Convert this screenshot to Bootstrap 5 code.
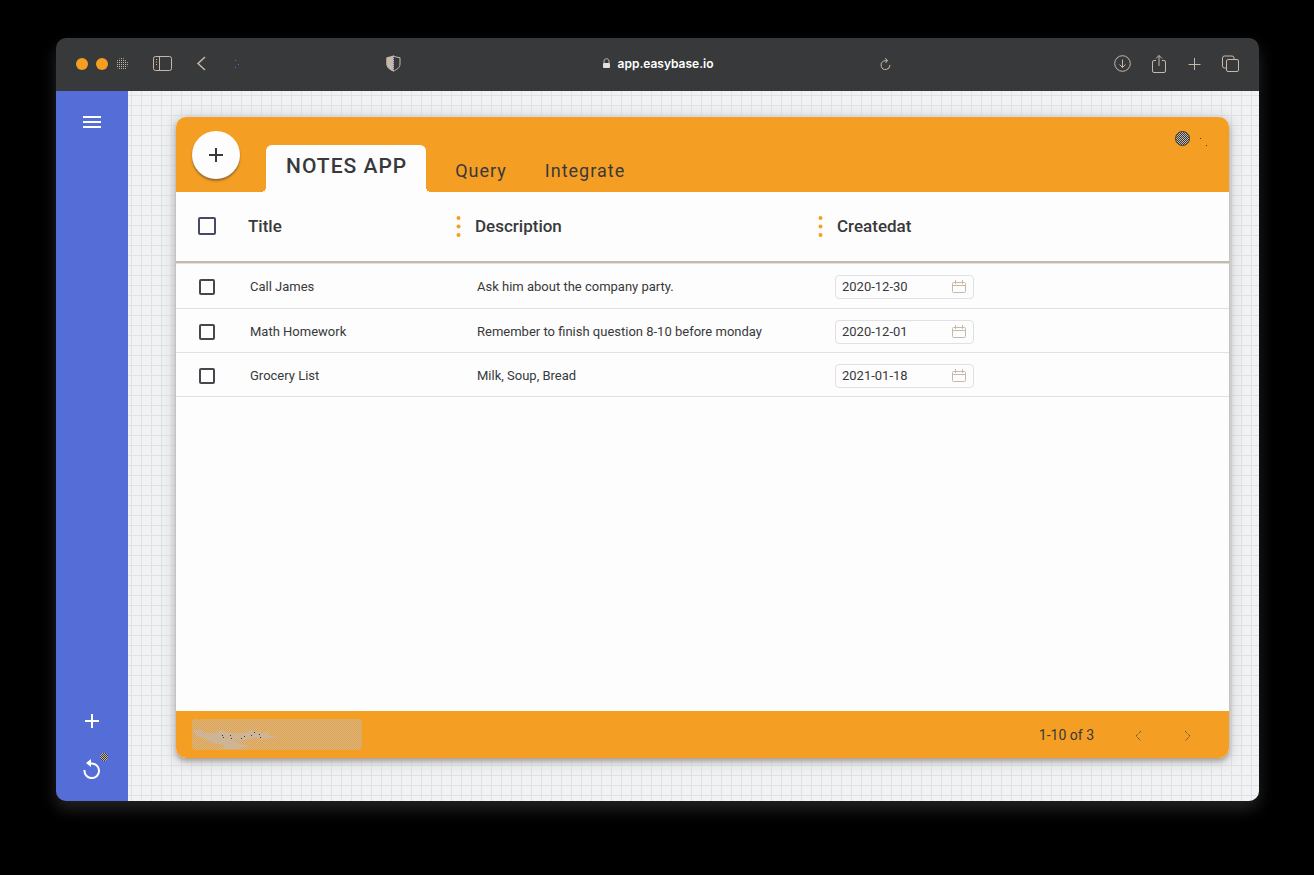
<!DOCTYPE html>
<html lang="en">
<head>
<meta charset="utf-8">
<meta name="viewport" content="width=device-width, initial-scale=1">
<title>Notes App</title>
<link href="https://cdn.jsdelivr.net/npm/bootstrap@5.3.0/dist/css/bootstrap.min.css" rel="stylesheet">
<style>
:root { --ink: #38393b; --amber: #f49e23; --indigo: #556dd6; --sand: #c7b9a9; --mist: #dfe1e5; --paper: #fdfdfd; }
body { background: #000; color: var(--ink); font-family: Roboto, "Liberation Sans", sans-serif; }
.desktop { padding: 38px 55px 74px 56px; }
.browser { border-radius: 10px; overflow: hidden; background: var(--ink); box-shadow: 0 8px 16px rgba(90, 90, 90, .4); }
.titlebar { display: grid; grid-template-columns: 1fr auto 1fr; height: 53px; padding-bottom: 2px; color: var(--sand); }
.plain { border: 0; padding: 0; background: none; color: inherit; display: flex; }
.light { width: 12px; height: 12px; border-radius: 50%; background: var(--amber); }
.light-off { background: repeating-conic-gradient(var(--sand) 0 25%, var(--ink) 0 100%) 0 0 / 2px 2px; }
.lights { gap: 8px; padding-left: 20px; }
.gap-side { margin-left: 25px; }
.gap-back { margin-left: 24px; }
.gap-forward { margin-left: 28px; }
.gap-shield { margin-right: 201px; }
.gap-reload { margin-left: 167px; }
.tools { gap: 20px; padding-right: 20px; }
.url { font: 600 12px/20px Inter, sans-serif; color: #fff; gap: 7px; }
.rail { width: 72px; flex: 0 0 auto; background: var(--indigo); color: #fff; padding: 24px 0 22px; }
.rail-bottom { gap: 30px; }
.dotted-badge { position: absolute; top: -5px; right: -7px; width: 8px; height: 8px; border-radius: 50%; background: repeating-conic-gradient(var(--ink) 0 25%, var(--sand) 0 50%) 0 0 / 2px 2px; }
.canvas { min-width: 0; padding: 26px 30px 43px 48px; background-color: #f1f2f3; background-image: linear-gradient(90deg, var(--mist) 1px, transparent 1px), linear-gradient(var(--mist) 1px, transparent 1px); background-size: 10px 10px; background-position: 3px 4px; }
.sheet { border-radius: 10px; background: var(--paper); box-shadow: 0 3px 5px rgba(150, 135, 115, .7), 0 2px 12px 4px rgba(205, 207, 213, .8); }
.sheet-top { height: 75px; background: var(--amber); border-radius: 10px 10px 0 0; padding: 0 20px 0 16px; }
.add { width: 48px; height: 48px; margin: 14px 26px 0 0; border-radius: 50%; background: var(--paper); color: var(--ink); border: 0; box-shadow: 0 2px 2px rgba(56, 57, 59, .5); }
.tab-on { height: 47px; padding: 0 19px 3px 20px; border-radius: 6px 6px 0 0; background: var(--paper); color: var(--ink); font-size: 21px; font-weight: 500; letter-spacing: 1px; text-decoration: none; }
.tab-on::before, .tab-on::after { content: ""; position: absolute; bottom: 0; width: 5px; height: 5px; }
.tab-on::before { right: 100%; background: radial-gradient(circle at 0 0, var(--amber) 5px, var(--paper) 5px); }
.tab-on::after { left: 100%; background: radial-gradient(circle at 100% 0, var(--amber) 5px, var(--paper) 5px); }
.tab-off { color: var(--ink); font-size: 18px; line-height: 24px; letter-spacing: 1px; text-decoration: none; margin: 0 9px 9px 29px; }
.knob { width: 15px; height: 15px; margin-top: 14px; border: 1px solid var(--ink); border-radius: 50%; background: repeating-conic-gradient(var(--ink) 0 25%, var(--sand) 0 50%) 0 0 / 2px 2px; }
.sheet-body { height: 519px; overflow: auto; }
.notes { table-layout: fixed; width: 100%; border-collapse: separate; border-spacing: 0; font-size: 13px; line-height: 20px; }
.notes th { height: 71px; padding: 0 0 1px; font-size: 17px; font-weight: 500; border-bottom: 2px solid var(--sand); box-shadow: 0 1px 0 var(--mist); }
.notes td { height: 44px; padding: 2px 0 0; border-bottom: 1px solid var(--mist); }
.notes tbody tr:first-child td { height: 46px; }
.notes .c-pick { width: 72px; padding-left: 22px; }
.c-title { width: 208px; }
.c-desc { width: 362px; }
.col-menu { margin-right: 14px; }
.notes td.c-title { padding-left: 2px; }
.notes td.c-desc { padding-left: 21px; }
.notes td.c-date { padding-left: 17px; }
.tick { appearance: none; display: block; width: 16px; height: 16px; margin: 0 0 0 1px; border: 2px solid #46464c; border-radius: 2px; background: var(--paper); }
.tick-all { width: 18px; height: 18px; margin: 0; border-color: #46496a; }
.tick:checked { background: var(--indigo); }
.date-box { width: 139px; height: 24px; border: 1px solid var(--mist); border-radius: 4px; padding: 0 7px 0 6px; color: var(--sand); }
.date-box input { width: 90px; border: 0; padding: 0; background: none; color: var(--ink); font-size: 13px; line-height: 20px; outline: 0; }
.sheet-foot { height: 47px; background: var(--amber); border-radius: 0 0 10px 10px; padding: 0 37px 0 16px; font-size: 14px; }
.search { position: relative; width: 170px; height: 31px; }
.search input { width: 100%; height: 100%; border: 0; border-radius: 4px; padding: 0 8px; background: repeating-conic-gradient(var(--amber) 0 25%, var(--sand) 0 50%) 0 0 / 2px 2px; }
.search svg { position: absolute; left: 0; top: 8px; pointer-events: none; }
.pager { gap: 40px; padding-top: 2px; }
</style>
</head>
<body>
<div class="desktop min-vh-100 d-flex flex-column">
<div class="browser flex-grow-1 d-flex flex-column">
  <header class="titlebar align-items-center">
    <div class="d-flex align-items-center">
      <div class="lights d-flex">
        <button class="plain light" aria-label="Close"></button>
        <button class="plain light" aria-label="Minimize"></button>
        <button class="plain light light-off" aria-label="Zoom"></button>
      </div>
      <button class="plain gap-side" aria-label="Sidebar"><svg width="19" height="16" fill="none" stroke="currentColor"><rect x=".5" y=".5" width="18" height="14" rx="2"/><path d="M6.500 1v14M3.500 3v1M3.500 5.500v1M3.500 8v1"/></svg></button>
      <button class="plain gap-back" aria-label="Back"><svg width="11" height="15" fill="none" stroke="currentColor" stroke-width="1.500"><path d="M9 1 2 7.500 9 14"/></svg></button>
      <svg class="gap-forward" width="10" height="10" fill="#556dd6" aria-hidden="true"><path d="M0 1h1v1H0zM3 5h1v1H3zM0 8h1v1H0z"/></svg>
      <button class="plain ms-auto gap-shield" aria-label="Privacy report"><svg width="15" height="17" fill="none" stroke="currentColor"><path d="M7.500 1 10 2l4 .7V9c0 4-4 6-6.500 7C5 15 1 13 1 9V2.700L5 2z"/><path d="M7.500 1 5 2 1 2.700V9c0 4 4 6 6.500 7z" fill="currentColor"/><path d="M7.500 2v14" stroke="#556dd6" stroke-dasharray="1 1"/></svg></button>
    </div>
    <div class="url d-flex align-items-center">
      <svg width="9" height="11" aria-hidden="true"><path d="M2 5V3c0-3 5-3 5 0v2" fill="none" stroke="#c7b9a9"/><rect x="1" y="5" width="7" height="5" rx="1" fill="#dfe1e5"/></svg>
      <span>app.easybase.io</span>
    </div>
    <div class="d-flex align-items-center">
      <button class="plain gap-reload" aria-label="Reload"><svg width="12" height="13" fill="none" stroke="currentColor"><path d="M3.500 4A4.500 4.500 0 1 0 10 8M3.500 4l4-.5M5 1l2.500 2.500L5.500 6"/></svg></button>
      <div class="tools d-flex align-items-center ms-auto">
        <button class="plain" aria-label="Downloads"><svg width="17" height="17" fill="none" stroke="currentColor"><circle cx="8.500" cy="8.500" r="7.800"/><path d="M8.500 4.500v8M5.500 9.500l3 3 3-3"/></svg></button>
        <button class="plain" aria-label="Share"><svg width="16" height="20" fill="none" stroke="currentColor"><path d="M5 6.500H3Q1.500 6.500 1.500 8v9q0 1.500 1.500 1.500h10q1.500 0 1.500-1.500V8q0-1.500-1.500-1.500h-2M8 12V1.500M5 4.500l3-3 3 3"/></svg></button>
        <button class="plain" aria-label="New tab"><svg width="15" height="14" fill="none" stroke="currentColor"><path d="M7.500 1v12M1.500 7.500h12"/></svg></button>
        <button class="plain" aria-label="Tab overview"><svg width="17" height="18" fill="none" stroke="currentColor"><path d="M5 13H2.500Q.5 13 .5 11V3Q.5 1 2.500 1H10q2 0 2 2v1"/><rect x="4.500" y="4.500" width="12" height="12" rx="1.500"/></svg></button>
      </div>
    </div>
  </header>

  <div class="d-flex flex-grow-1">
    <nav class="rail d-flex flex-column align-items-center justify-content-between" aria-label="Main">
      <button class="plain" aria-label="Menu"><svg width="18" height="14" fill="#fff"><path d="M0 1h18v2H0zM0 6h18v2H0zM0 11h18v2H0z"/></svg></button>
      <div class="rail-bottom d-flex flex-column align-items-center">
        <button class="plain" aria-label="New"><svg width="14" height="14" fill="none" stroke="#fff" stroke-width="2"><path d="M7 0v14M0 7h14"/></svg></button>
        <button class="plain position-relative" aria-label="Refresh"><svg width="18" height="21" fill="none" stroke="#fff" stroke-width="2"><path d="M1.500 12A7.300 7.300 0 1 0 8 5.500H6"/><path d="M8 1v8L3 5z" fill="#fff" stroke="none"/></svg><span class="dotted-badge"></span></button>
      </div>
    </nav>

    <main class="canvas flex-grow-1">
      <section class="sheet">
        <div class="sheet-top d-flex">
          <button class="add d-flex align-items-center justify-content-center flex-shrink-0" aria-label="Add record"><svg width="14" height="14" fill="none" stroke="currentColor" stroke-width="2"><path d="M7 0v14M0 7h14"/></svg></button>
          <nav class="d-flex align-items-end" aria-label="Views">
            <a href="#" class="tab-on position-relative d-flex align-items-center text-nowrap">NOTES APP</a>
            <a href="#" class="tab-off">Query</a>
            <a href="#" class="tab-off">Integrate</a>
          </nav>
          <button class="plain ms-auto knob" aria-label="Theme"></button>
          <svg class="ms-2 mt-3" width="11" height="14" fill="#38393b" aria-hidden="true"><path d="M6 -1h1v1H6zM2 5h1v1H2zM8 12h1v1H8z"/></svg>
        </div>

        <div class="sheet-body">
          <table class="notes">
            <thead>
              <tr>
                <th class="c-pick"><input type="checkbox" class="tick tick-all" aria-label="Select all"></th>
                <th class="c-title">Title</th>
                <th class="c-desc"><div class="d-flex align-items-center"><button class="plain col-menu" aria-label="Title column menu"><svg width="5" height="22" fill="#f49e23"><circle cx="2.500" cy="3" r="2"/><circle cx="2.500" cy="11.500" r="2"/><circle cx="2.500" cy="20" r="2"/></svg></button>Description</div></th>
                <th class="c-date"><div class="d-flex align-items-center"><button class="plain col-menu" aria-label="Description column menu"><svg width="5" height="22" fill="#f49e23"><circle cx="2.500" cy="3" r="2"/><circle cx="2.500" cy="11.500" r="2"/><circle cx="2.500" cy="20" r="2"/></svg></button>Createdat</div></th>
              </tr>
            </thead>
            <tbody>
              <tr>
                <td class="c-pick"><input type="checkbox" class="tick" aria-label="Select Call James"></td>
                <td class="c-title">Call James</td>
                <td class="c-desc">Ask him about the company party.</td>
                <td class="c-date"><div class="date-box d-flex align-items-center justify-content-between"><input type="text" value="2020-12-30" aria-label="Created at"><svg width="14" height="14" fill="none" stroke="currentColor"><rect x=".5" y="2.500" width="13" height="10" rx="1"/><path d="M1 5.500h12M3.500 0v4M10.500 0v4"/></svg></div></td>
              </tr>
              <tr>
                <td class="c-pick"><input type="checkbox" class="tick" aria-label="Select Math Homework"></td>
                <td class="c-title">Math Homework</td>
                <td class="c-desc">Remember to finish question 8-10 before monday</td>
                <td class="c-date"><div class="date-box d-flex align-items-center justify-content-between"><input type="text" value="2020-12-01" aria-label="Created at"><svg width="14" height="14" fill="none" stroke="currentColor"><rect x=".5" y="2.500" width="13" height="10" rx="1"/><path d="M1 5.500h12M3.500 0v4M10.500 0v4"/></svg></div></td>
              </tr>
              <tr>
                <td class="c-pick"><input type="checkbox" class="tick" aria-label="Select Grocery List"></td>
                <td class="c-title">Grocery List</td>
                <td class="c-desc">Milk, Soup, Bread</td>
                <td class="c-date"><div class="date-box d-flex align-items-center justify-content-between"><input type="text" value="2021-01-18" aria-label="Created at"><svg width="14" height="14" fill="none" stroke="currentColor"><rect x=".5" y="2.500" width="13" height="10" rx="1"/><path d="M1 5.500h12M3.500 0v4M10.500 0v4"/></svg></div></td>
              </tr>
            </tbody>
          </table>
        </div>

        <div class="sheet-foot d-flex align-items-center justify-content-between">
          <div class="search">
            <input type="text" aria-label="Search">
            <svg width="92" height="22" aria-hidden="true"><path d="M1 3h8l4 3h10l6-3 9 3h14l8-3 10 3 9-2-5 4 12 2-15 2-10-1-12 3-9-2 8 5 9 2-10 3H30l3-4-12-2-7-4L5 9z" fill="#c7b9a9" opacity=".7"/><path d="M30 8h1v1h-1zM31 10h1v1h-1zM38 8h1v1h-1zM39 11h1v1h-1zM49 11h1v1h-1zM52 9h1v1h-1zM59 8h1v1h-1zM62 5h1v1h-1zM67 7h1v1h-1zM68 10h1v1h-1z" fill="#38393b"/></svg>
          </div>
          <div class="pager d-flex align-items-center">
            <span>1-10 of 3</span>
            <button class="plain" aria-label="Previous page"><svg width="9" height="10" fill="none" stroke="currentColor" stroke-dasharray="1 1"><path d="M7 0 2 5l5 5"/></svg></button>
            <button class="plain" aria-label="Next page"><svg width="9" height="10" fill="none" stroke="currentColor" stroke-dasharray="1 1"><path d="M2 0l5 5-5 5"/></svg></button>
          </div>
        </div>
      </section>
    </main>
  </div>
</div>
</div>
<script src="https://cdn.jsdelivr.net/npm/bootstrap@5.3.0/dist/js/bootstrap.bundle.min.js"></script>
</body>
</html>
